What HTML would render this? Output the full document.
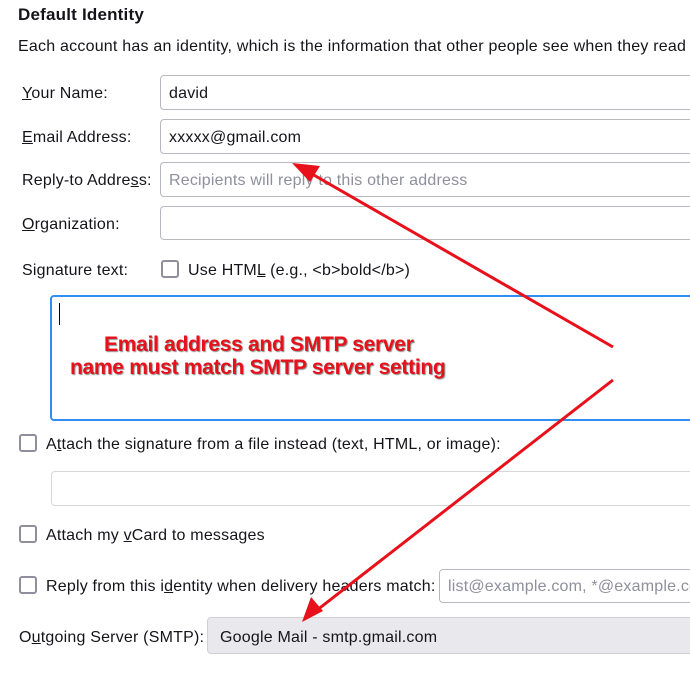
<!DOCTYPE html>
<html><head><style>
body{margin:0;width:690px;height:673px;overflow:hidden;background:#fff;font-family:"Liberation Sans",sans-serif;color:#15141a;position:relative}
.a{position:absolute;white-space:nowrap;font-size:16px;letter-spacing:0.2px;top:1px}
.box{position:absolute;border:1px solid #b8b8bf;border-radius:4px;background:#fff;box-sizing:border-box}
.cb{position:absolute;width:18px;height:18px;border:2px solid #8f8f9d;border-radius:3px;box-sizing:border-box}
.ph{color:#8f8f9d}
u{text-decoration:underline}
.red{position:absolute;font-weight:bold;font-size:21px;color:#e8101a;text-shadow:1px 1px 1px #888,-1px -1px 0 #fff;letter-spacing:-0.3px;white-space:nowrap}
</style></head><body>
<div class="a" style="left:18px;top:5px;font-weight:bold;font-size:17px">Default Identity</div>
<div class="a" style="left:18px;top:38px;letter-spacing:0.22px">Each account has an identity, which is the information that other people see when they read</div>

<div class="a" style="left:22px;top:85px"><u>Y</u>our Name:</div>
<div class="box" style="left:160px;top:75px;width:540px;height:35px"></div>
<div class="a" style="left:169px;top:85px">david</div>

<div class="a" style="left:22px;top:129px"><u>E</u>mail Address:</div>
<div class="box" style="left:160px;top:119px;width:540px;height:35px"></div>
<div class="a" style="left:169px;top:129px">xxxxx@gmail.com</div>

<div class="a" style="left:22px;top:172px">Reply-to Addre<u>s</u>s:</div>
<div class="box" style="left:160px;top:162px;width:540px;height:35px"></div>
<div class="a ph" style="left:169px;top:172px">Recipients will reply to this other address</div>

<div class="a" style="left:22px;top:216px"><u>O</u>rganization:</div>
<div class="box" style="left:160px;top:206px;width:540px;height:34px"></div>

<div class="a" style="left:22px;top:262px">Signature text:</div>
<div class="cb" style="left:161px;top:260px"></div>
<div class="a" style="left:188px;top:262px">Use HTM<u>L</u> (e.g., &lt;b&gt;bold&lt;/b&gt;)</div>

<div class="box" style="left:50px;top:295px;width:650px;height:126px;border:2px solid #2f8ef0"></div>
<div style="position:absolute;left:59px;top:303px;width:1px;height:22px;background:#000"></div>
<div class="red" style="left:104px;top:333px">Email address and SMTP server</div>
<div class="red" style="left:70px;top:356px">name must match SMTP server setting</div>

<div class="cb" style="left:19px;top:434px"></div>
<div class="a" style="left:46px;top:436px">A<u>t</u>tach the signature from a file instead (text, HTML, or image):</div>
<div class="box" style="left:51px;top:471px;width:650px;height:35px;border-color:#d6d6db"></div>

<div class="cb" style="left:19px;top:525px"></div>
<div class="a" style="left:46px;top:527px">Attach my <u>v</u>Card to messages</div>

<div class="cb" style="left:19px;top:576px"></div>
<div class="a" style="left:46px;top:578px">Reply from this i<u>d</u>entity when delivery headers match:</div>
<div class="box" style="left:439px;top:569px;width:260px;height:34px"></div>
<div class="a ph" style="left:448px;top:578px">list@example.com, *@example.com</div>

<div class="a" style="left:19px;top:629px">O<u>u</u>tgoing Server (SMTP):</div>
<div class="box" style="left:207px;top:617px;width:500px;height:37px;background:#e9e9ed;border-color:#d0d0d7"></div>
<div class="a" style="left:220px;top:629px">Google Mail - smtp.gmail.com</div>

<svg style="position:absolute;left:0;top:0" width="690" height="673">
<g stroke="#e8101a" stroke-width="3" fill="#e8101a">
<line x1="613" y1="347" x2="305" y2="170"/>
<line x1="613" y1="380" x2="312" y2="614"/>
</g>
<polygon points="292,163 320,166 310,182" fill="#e8101a"/>
<polygon points="302,622 311,597 323,611" fill="#e8101a"/>
</svg>
</body></html>
